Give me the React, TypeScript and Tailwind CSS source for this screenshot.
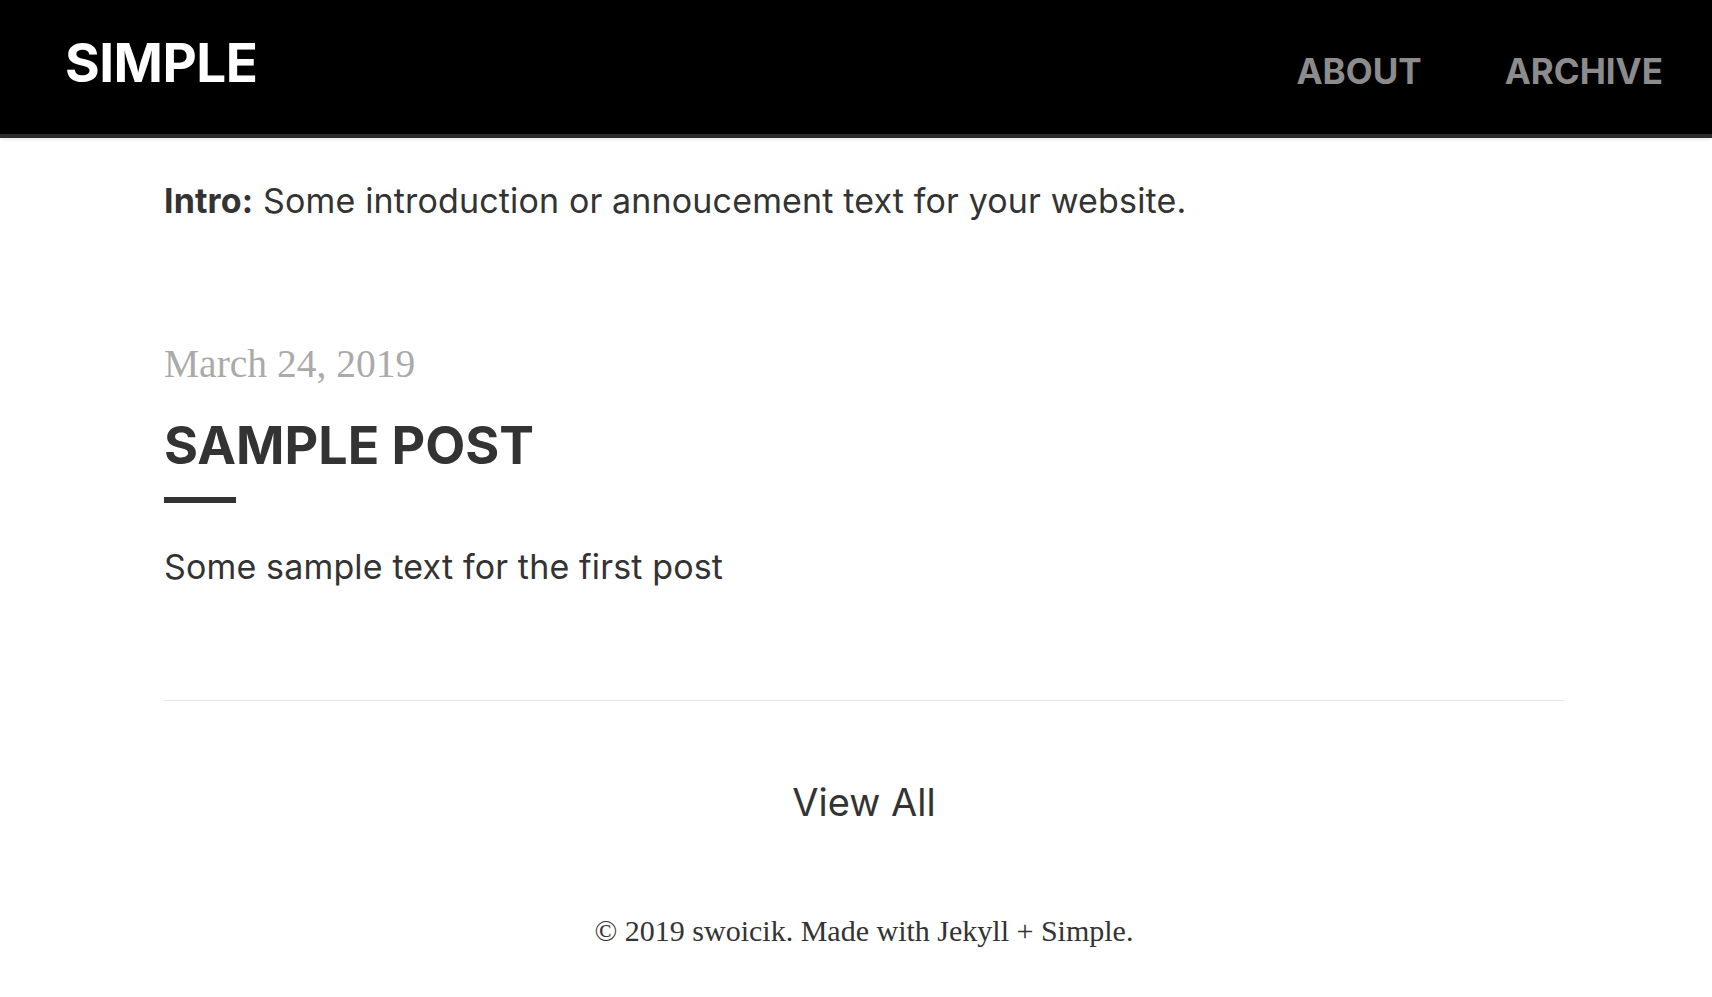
const sans = 'font-["Inter","Liberation_Sans",sans-serif]';
const serif = 'font-["Liberation_Serif","DejaVu_Serif",serif]';

function Header() {
  return (
    <header className="flex h-[138px] items-center justify-between border-b-4 border-[#2b2b2b] bg-black pl-[65px] pr-[49px] shadow-[0_2px_3px_rgba(0,0,0,0.08)]">
      <a className={`${sans} pb-[6px] text-[53px] font-bold tracking-[-0.5px] text-white`}>SIMPLE</a>
      <nav className={`${sans} flex items-center gap-[83px] pt-[8px] text-[35px] font-bold text-[#8c8c8c]`}>
        <a>ABOUT</a>
        <a>ARCHIVE</a>
      </nav>
    </header>
  );
}

function Post() {
  return (
    <article>
      <p className={`${serif} mt-[115px] h-[48px] text-[39.5px] leading-[48px] text-[#aaaaaa]`}>March 24, 2019</p>
      <h2 className={`${sans} mt-[26px] h-[64px] text-[52px] font-bold leading-[64px] text-[#333333]`}>SAMPLE POST</h2>
      <div className="mt-[19px] h-[6px] w-[72px] bg-[#333333]" />
      <p className={`${sans} mt-[40px] h-[48px] text-[34px] tracking-[0.15px] leading-[48px] text-[#333333]`}>
        Some sample text for the first post
      </p>
    </article>
  );
}

export default function App() {
  return (
    <div className="min-h-[997px] bg-white">
      <Header />
      <main className="ml-[164px] w-[1400px]">
        <p className={`${sans} mt-[39px] h-[48px] text-[34px] tracking-[0.15px] leading-[48px] text-[#333333]`}>
          <strong className="font-bold">Intro:</strong> Some introduction or annoucement text for your website.
        </p>
        <Post />
        <hr className="mt-[109px] border-0 border-t border-[#e6e6e6]" />
        <div className="mt-[73px] flex h-[56px] justify-center">
          <a className={`${sans} text-[38px] leading-[56px] text-[#333333]`}>View All</a>
        </div>
        <footer className={`${serif} mt-[81px] h-[40px] text-center text-[30px] leading-[40px] text-[#333333]`}>
          © 2019 swoicik. Made with Jekyll + Simple.
        </footer>
      </main>
    </div>
  );
}
